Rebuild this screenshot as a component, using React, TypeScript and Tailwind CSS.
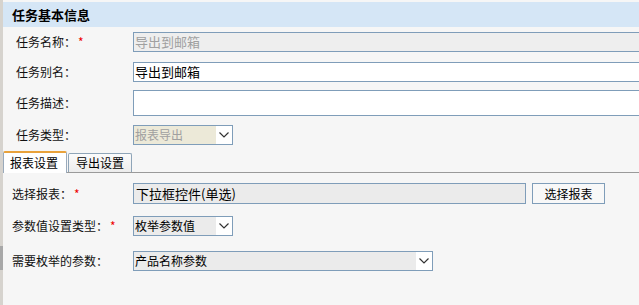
import React from "react";

const font = { fontFamily: '"Noto Sans CJK SC", "Liberation Sans", sans-serif' };

function Chevron() {
  return (
    <svg width="10" height="6" viewBox="0 0 10 6" className="block">
      <path d="M0.5 0.5 L5 5 L9.5 0.5" fill="none" stroke="#333" strokeWidth="1.2" />
    </svg>
  );
}

function Select({ text, width, bg, color }: { text: string; width: string; bg: string; color: string }) {
  return (
    <div className={`flex h-[20px] border border-[#7f9db9] ${width}`}>
      <div className={`flex-1 text-[12px] leading-[18px] pl-[1px] ${bg} ${color}`}>{text}</div>
      <div className="w-[16px] bg-white flex items-center justify-center">
        <Chevron />
      </div>
    </div>
  );
}

function Label({ text, star, pl }: { text: string; star?: boolean; pl: string }) {
  return (
    <div className={`w-[130px] shrink-0 text-[12px] text-[#111] ${pl}`}>
      {text}
      {star && <span className="text-[#e00] ml-[2px]">*</span>}
    </div>
  );
}

export default function App() {
  return (
    <div className="flex w-[639px] h-[305px] overflow-hidden bg-[#f6f6f6]" style={font}>
      <div className="w-[3px] shrink-0 bg-[#d6d3ce] relative">
        <div className="absolute top-[246px] left-0 w-[3px] h-[24px] bg-[#a8a8a8]" />
      </div>
      <div className="flex-1 flex flex-col min-w-0">
        <div className="mt-[2px] h-[25px] bg-[#d5e6f6] pl-[9px] text-[13px] font-bold leading-[25px] text-black">
          任务基本信息
        </div>

        <div className="mt-[5px] flex items-center">
          <Label text="任务名称：" star pl="pl-[13px]" />
          <div className="w-[520px] shrink-0 h-[20px] border border-[#7f9db9] bg-[#eeeeee] text-[13px] leading-[18px] pl-[1px] text-[#a0a0a0]">
            导出到邮箱
          </div>
        </div>

        <div className="mt-[10px] flex items-center">
          <Label text="任务别名：" pl="pl-[13px]" />
          <div className="w-[520px] shrink-0 h-[20px] border border-[#7f9db9] bg-white text-[13px] leading-[18px] pl-[1px] text-black">
            导出到邮箱
          </div>
        </div>

        <div className="mt-[8px] flex items-center">
          <Label text="任务描述：" pl="pl-[13px]" />
          <div className="w-[520px] shrink-0 h-[26px] border border-[#7f9db9] bg-white" />
        </div>

        <div className="mt-[9px] flex items-center">
          <Label text="任务类型：" pl="pl-[13px]" />
          <Select text="报表导出" width="w-[100px]" bg="bg-[#ece9d8]" color="text-[#a0a0a0]" />
        </div>

        <div className="mt-[6px] flex items-end h-[22px] border-b border-[#9a9a9a]">
          <div className="w-[64px] h-[22px] -mb-[1px] bg-white border-t-2 border-t-[#e9a23b] border-x border-x-[#9aaabb] rounded-t-[2px] text-[12px] leading-[19px] pl-[6px] text-black">
            报表设置
          </div>
          <div className="ml-[1px] w-[64px] h-[19px] bg-gradient-to-b from-[#fbfbfb] to-[#ececec] border border-b-0 border-[#8fa5b8] rounded-t-[2px] text-[12px] leading-[18px] pl-[7px] text-black">
            导出设置
          </div>
        </div>

        <div className="mt-[10px] flex items-center">
          <Label text="选择报表：" star pl="pl-[9px]" />
          <div className="w-[393px] shrink-0 h-[21px] border border-[#7f9db9] bg-[#ebebeb] text-[13px] leading-[19px] pl-[2px] text-black">
            下拉框控件(单选)
          </div>
          <div className="ml-[6px] w-[73px] h-[21px] border border-[#7f9db9] bg-[#f8f8f8] text-[12px] leading-[19px] text-center text-black">
            选择报表
          </div>
        </div>

        <div className="mt-[12px] flex items-center">
          <Label text="参数值设置类型：" star pl="pl-[9px]" />
          <Select text="枚举参数值" width="w-[100px]" bg="bg-[#ebebeb]" color="text-black" />
        </div>

        <div className="mt-[15px] flex items-center">
          <Label text="需要枚举的参数：" pl="pl-[9px]" />
          <Select text="产品名称参数" width="w-[300px]" bg="bg-[#ebebeb]" color="text-black" />
        </div>
      </div>
    </div>
  );
}
